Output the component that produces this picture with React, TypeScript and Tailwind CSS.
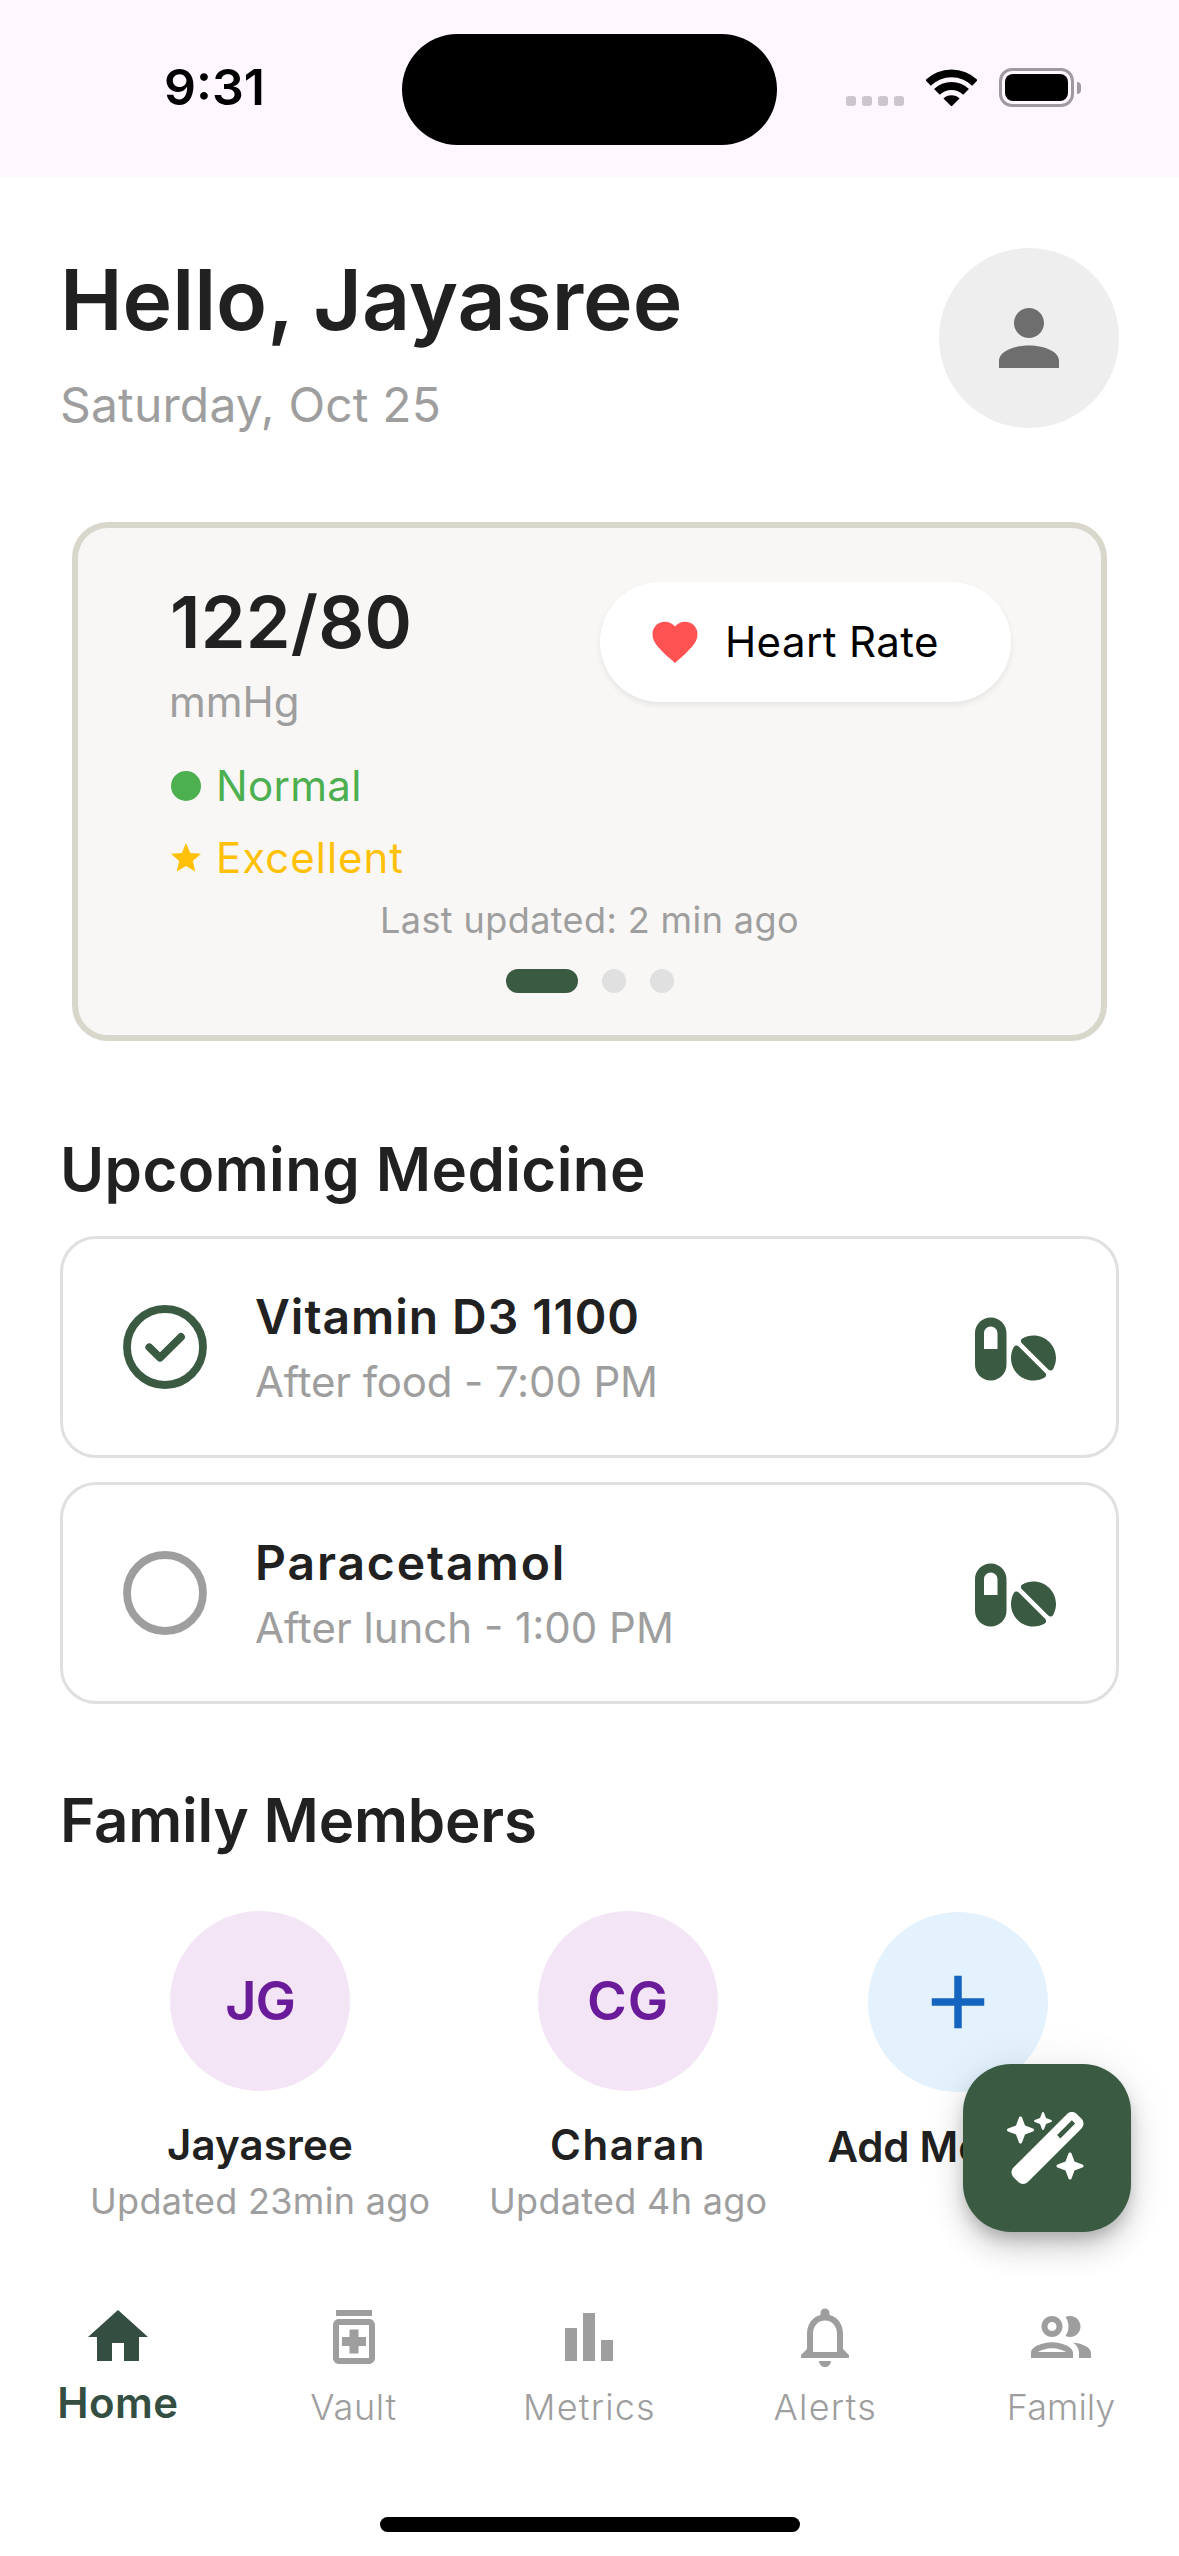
import type { ReactNode } from "react";
import { FaPills, FaWandMagicSparkles } from "react-icons/fa6";

function Glyph({ d, className }: { d: string; className: string }) {
  return (
    <svg viewBox="0 0 24 24" fill="currentColor" className={`block shrink-0 ${className}`}>
      <path d={d} />
    </svg>
  );
}

const icons = {
  profile:
    "M12 12c2.21 0 4-1.79 4-4s-1.79-4-4-4-4 1.79-4 4 1.79 4 4 4zm0 2c-4.42 0-8 1.79-8 4v2h16v-2c0-2.21-3.58-4-8-4z",
  heart:
    "M12 21.35l-1.45-1.32C5.4 15.36 2 12.28 2 8.5 2 5.42 4.42 3 7.5 3c1.74 0 3.41.81 4.5 2.09C13.09 3.81 14.76 3 16.5 3 19.58 3 22 5.42 22 8.5c0 3.78-3.4 6.86-8.55 11.54L12 21.35z",
  circle: "M12 2a10 10 0 1 0 0 20 10 10 0 0 0 0-20z",
  star: "M12 17.27L18.18 21l-1.64-7.03L22 9.24l-7.19-.61L12 2 9.19 8.63 2 9.24l5.46 4.73L5.82 21z",
  plus: "M19 13h-6v6h-2v-6H5v-2h6V5h2v6h6v2z",
  home: "M10 20v-6h4v6h5v-8h3L12 3 2 12h3v8z",
  vault:
    "M6 3h12v2H6zM17 6H7c-1.1 0-2 .9-2 2v11c0 1.1.9 2 2 2h10c1.1 0 2-.9 2-2V8c0-1.1-.9-2-2-2zm0 13H7V8h10v11zM10.5 9.5h3v2.5H16v3h-2.5v2.5h-3V15H8v-3h2.5z",
  metrics: "M4 9h4v11H4zM16 13h4v7h-4zM10 4h4v16h-4z",
  alerts:
    "M12 22c1.1 0 2-.9 2-2h-4c0 1.1.9 2 2 2zm6-6v-5c0-3.07-1.63-5.64-4.5-6.32V4c0-.83-.67-1.5-1.5-1.5s-1.5.67-1.5 1.5v.68C7.64 5.36 6 7.92 6 11v5l-2 2v1h16v-1l-2-2zm-2 1H8v-6c0-2.48 1.51-4.5 4-4.5s4 2.02 4 4.5v6z",
  family:
    "M9 13.75c-2.34 0-7 1.17-7 3.5V19h14v-1.75c0-2.33-4.66-3.5-7-3.5zM4.34 17c.84-.58 2.87-1.25 4.66-1.25s3.82.67 4.66 1.25H4.34zM9 12c1.93 0 3.5-1.57 3.5-3.5S10.93 5 9 5 5.5 6.57 5.5 8.5 7.07 12 9 12zm0-5c.83 0 1.5.67 1.5 1.5S9.83 10 9 10s-1.5-.67-1.5-1.5S8.17 7 9 7zm7.04 6.81c1.16.84 1.96 1.96 1.96 3.44V19h4v-1.75c0-2.02-3.5-3.17-5.96-3.44zM15 12c1.93 0 3.5-1.57 3.5-3.5S16.93 5 15 5c-.54 0-1.04.13-1.5.35.63.89 1 1.98 1 3.15s-.37 2.26-1 3.15c.46.22.96.35 1.5.35z",
};

function StatusBar() {
  return (
    <header className="relative h-[177px] bg-[#fef7ff]">
      <div className="flex items-start justify-between pt-[62px] pr-[98px] pl-[164px]">
        <span className="text-[50px] leading-[51px] font-semibold text-black">9:31</span>
        <div className="flex h-[51px] items-center">
          <div className="mt-[27px] mr-[22px] flex gap-[6px]">
            {[0, 1, 2, 3].map((i) => (
              <span key={i} className="size-[10px] rounded-[3px] bg-[#cbc5cc]" />
            ))}
          </div>
          <svg viewBox="0 0 152 112" className="mr-[22px] h-[37.5px] w-[51px]" fill="black">
            <path d="M-2 33A112 112 0 0 1 154 33L138 50A88 88 0 0 0 14 50Z" />
            <path d="M24 60A74 74 0 0 1 128 60L111 77A50 50 0 0 0 41 77Z" />
            <path d="M52 88A34 34 0 0 1 100 88L76 112Z" />
          </svg>
          <div className="flex h-[39px] w-[75px] items-center justify-center rounded-[13px] border-[3px] border-[#9f9a9f]">
            <div className="h-[27px] w-[63px] rounded-[8px] bg-black" />
          </div>
          <div className="ml-[3px] h-[12px] w-[4px] rounded-r-full bg-[#9f9a9f]" />
        </div>
      </div>
      <div className="absolute top-[33.5px] left-[402px] h-[111px] w-[375px] rounded-full bg-black" />
    </header>
  );
}

function VitalsCard() {
  return (
    <section className="mx-[72px] mt-[94px] h-[519px] rounded-[36px] border-[6px] border-[#d9d7cb] bg-[#f8f7f5] pt-[54px]">
      <div className="flex items-start justify-between pr-[90px] pl-[90px]">
        <div className="pt-[3px]">
          <p className="ml-[2px] text-[72px] leading-[73px] font-semibold tracking-[0.2px]">122/80</p>
          <p className="mt-[23px] ml-px text-[42px] leading-[42px] text-[#9e9e9e]">mmHg</p>
          <div className="mt-[42px] flex h-[42px] items-center gap-3 text-[#4caf50]">
            <Glyph d={icons.circle} className="size-9" />
            <span className="text-[42px] leading-[42px] tracking-[0.3px]">Normal</span>
          </div>
          <div className="mt-[30px] flex h-[42px] items-center gap-3 text-[#ffc107]">
            <Glyph d={icons.star} className="size-9" />
            <span className="text-[42px] leading-[42px] tracking-[1px]">Excellent</span>
          </div>
        </div>
        <div className="flex h-[120px] w-[411px] items-center gap-[23px] rounded-full bg-white pl-12 shadow-[0_3px_6px_rgba(0,0,0,0.08)]">
          <Glyph d={icons.heart} className="size-[54px] text-[#ff5252]" />
          <span className="text-[42px] leading-[42px] tracking-[0.4px] whitespace-nowrap text-black">Heart Rate</span>
        </div>
      </div>
      <p className="mt-[23px] text-center text-[36px] leading-[36px] tracking-[0.4px] text-[#9e9e9e]">
        Last updated: 2 min ago
      </p>
      <div className="mt-[31px] flex justify-center gap-6">
        <span className="h-6 w-[72px] rounded-full bg-[#3a5a42]" />
        <span className="size-6 rounded-full bg-[#e0e0e0]" />
        <span className="size-6 rounded-full bg-[#e0e0e0]" />
      </div>
    </section>
  );
}

function Medicine({ done, children }: { done?: boolean; children: ReactNode }) {
  return (
    <li className="flex h-[222px] items-center rounded-[36px] border-[3px] border-[#e0e0e0] bg-white px-[60px]">
      <svg
        viewBox="0 0 84 84"
        fill="none"
        strokeWidth="7.8"
        strokeLinecap="round"
        strokeLinejoin="round"
        className={done ? "size-[84px] stroke-[#3a5a42]" : "size-[84px] stroke-[#9e9e9e]"}
      >
        <circle cx="42" cy="42" r="38" />
        {done && <path d="M26.3 42.3 37 52.7 58 31.9" />}
      </svg>
      <div className="ml-[48px] flex-1">{children}</div>
      <FaPills className="mt-1 h-[72px] w-[81px] text-[#3a5a42]" />
    </li>
  );
}

export default function App() {
  return (
    <div className="relative h-[2556px] w-[1179px] overflow-hidden bg-white font-['Inter',sans-serif] text-[#212121]">
      <StatusBar />

      <div className="mt-[71px] flex h-[180px] justify-between px-[60px]">
        <div className="pt-[9px]">
          <h1 className="text-[84px] leading-[85px] font-semibold tracking-[-0.05px]">Hello, Jayasree</h1>
          <p className="mt-[38px] text-[48px] leading-[49px] tracking-[0.15px] text-[#9e9e9e]">Saturday, Oct 25</p>
        </div>
        <div className="flex size-[180px] items-center justify-center rounded-full bg-[#eeeeee]">
          <Glyph d={icons.profile} className="size-[90px] text-[#6e6e6e]" />
        </div>
      </div>

      <VitalsCard />

      <h2 className="mt-[98px] ml-[60px] text-[60px] leading-[60px] font-semibold tracking-[0.4px]">
        Upcoming Medicine
      </h2>
      <ul className="mx-[60px] mt-[37px] flex flex-col gap-6">
        <Medicine done>
          <p className="text-[48px] leading-[49px] font-semibold tracking-[0.95px]">Vitamin D3 1100</p>
          <p className="mt-[20px] text-[42px] leading-[42px] tracking-[-0.15px] text-[#9e9e9e]">After food - 7:00 PM</p>
        </Medicine>
        <Medicine>
          <p className="text-[48px] leading-[49px] font-semibold tracking-[1.9px]">Paracetamol</p>
          <p className="mt-[20px] text-[42px] leading-[42px] text-[#9e9e9e]">After lunch - 1:00 PM</p>
        </Medicine>
      </ul>

      <h2 className="mt-[86px] ml-[60px] text-[60px] leading-[61px] font-semibold tracking-[-0.2px]">
        Family Members
      </h2>
      <div className="mt-[60px] flex h-[308px] items-start pl-[90px] text-center whitespace-nowrap">
        <div className="w-[340px]">
          <div className="mx-auto flex size-[180px] items-center justify-center rounded-full bg-[#f3e5f5] text-[54px] leading-[54px] font-semibold tracking-[-1px] text-[#6a1b9a]">
            JG
          </div>
          <p className="mt-[33px] text-[42px] leading-[42px] font-semibold tracking-[0.15px]">Jayasree</p>
          <p className="mt-[17px] text-[36px] leading-[36px] tracking-[0.3px] text-[#9e9e9e]">Updated 23min ago</p>
        </div>
        <div className="ml-[59px] w-[278px]">
          <div className="mx-auto flex size-[180px] items-center justify-center rounded-full bg-[#f3e5f5] text-[54px] leading-[54px] font-semibold tracking-[1px] text-[#6a1b9a]">
            CG
          </div>
          <p className="mt-[33px] text-[42px] leading-[42px] font-semibold tracking-[1.5px]">Charan</p>
          <p className="mt-[17px] text-[36px] leading-[36px] tracking-[0.3px] text-[#9e9e9e]">Updated 4h ago</p>
        </div>
        <div className="mt-px ml-[60px] w-[261px]">
          <div className="mx-auto flex size-[180px] items-center justify-center rounded-full bg-[#e3f2fd] text-[#1565c0]">
            <Glyph d={icons.plus} className="size-[90px]" />
          </div>
          <p className="mt-[34px] text-[42px] leading-[42px] font-semibold tracking-[-0.2px]">Add Member</p>
        </div>
      </div>

      <nav className="mt-[82px] grid h-[124px] grid-cols-5 text-center text-[36px] leading-[36px] font-light text-[#9e9e9e]">
        <div className="flex flex-col items-center text-[#344e41]">
          <Glyph d={icons.home} className="size-[72px]" />
          <span className="mt-[9px] text-[42px] leading-[42px] font-semibold tracking-[0.4px]">Home</span>
        </div>
        <div className="flex flex-col items-center">
          <Glyph d={icons.vault} className="size-[72px]" />
          <span className="mt-4 tracking-[0.7px]">Vault</span>
        </div>
        <div className="flex flex-col items-center">
          <Glyph d={icons.metrics} className="size-[72px]" />
          <span className="mt-4 tracking-[1.2px]">Metrics</span>
        </div>
        <div className="flex flex-col items-center">
          <Glyph d={icons.alerts} className="size-[72px]" />
          <span className="mt-4 tracking-[1.3px]">Alerts</span>
        </div>
        <div className="flex flex-col items-center">
          <Glyph d={icons.family} className="size-[72px]" />
          <span className="mt-4">Family</span>
        </div>
      </nav>
      <div className="mx-auto mt-[92px] h-[15px] w-[420px] rounded-full bg-black" />

      <button className="absolute top-[2064px] left-[963px] flex size-[168px] items-center justify-center rounded-[48px] bg-[#3a5a42] text-white shadow-[0_9px_15px_-3px_rgba(0,0,0,0.2),0_18px_30px_rgba(0,0,0,0.14),0_3px_48px_rgba(0,0,0,0.08)]">
        <FaWandMagicSparkles className="h-[72px] w-[81px]" />
      </button>
    </div>
  );
}
